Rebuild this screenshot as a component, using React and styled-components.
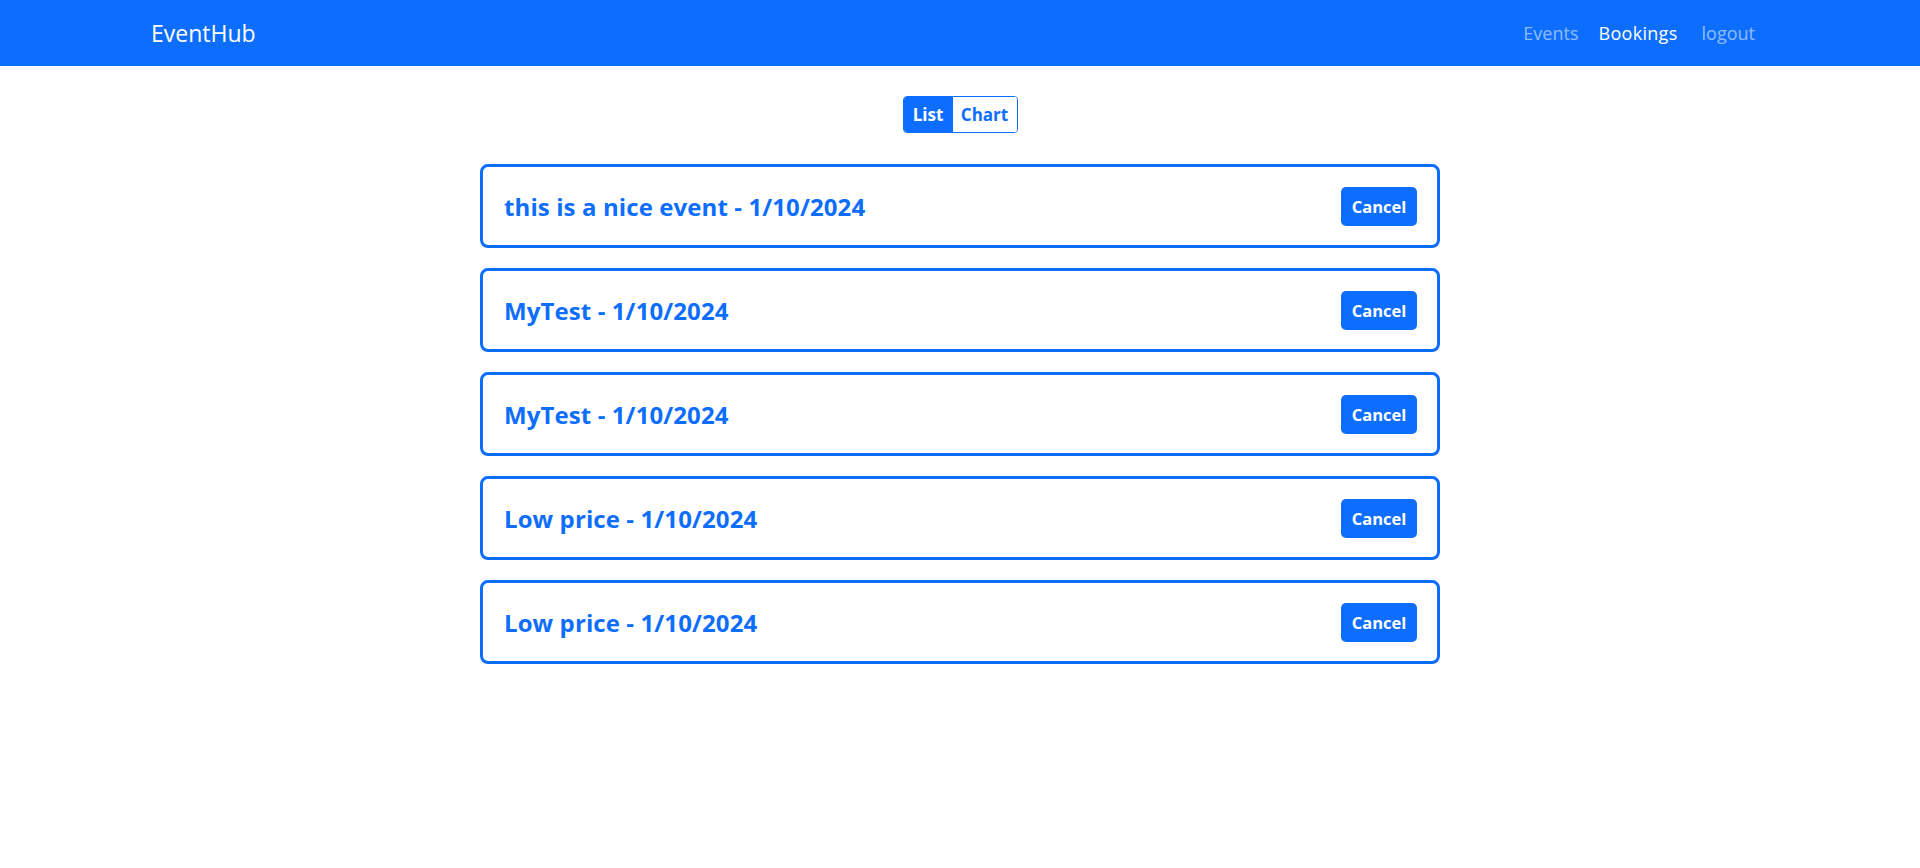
import React, { useState } from "react";
import styled, { createGlobalStyle } from "styled-components";

const GlobalStyle = createGlobalStyle`
  html, body {
    margin: 0;
    padding: 0;
    background: #fff;
    font-family: "Open Sans", "Noto Sans", "Liberation Sans", sans-serif;
  }
  * {
    box-sizing: border-box;
  }
`;

const Navbar = styled.nav`
  height: 66px;
  background: #0d6efd;
  display: flex;
  align-items: center;
  justify-content: space-between;
  padding: 0 165px 0 151px;
`;

const Brand = styled.a`
  color: #fff;
  font-size: 23px;
  text-decoration: none;
  cursor: pointer;
`;

const NavLinks = styled.div`
  display: flex;
  align-items: center;
`;

const NavLink = styled.a`
  color: ${(p) => (p.$active ? "#fff" : "rgba(255, 255, 255, 0.55)")};
  font-size: 18px;
  letter-spacing: ${(p) => (p.$active ? "0.3px" : "0")};
  padding: 8px 0;
  margin-left: ${(p) => p.$gap}px;
  text-decoration: none;
  cursor: pointer;
`;

const Main = styled.main`
  display: flex;
  flex-direction: column;
  align-items: center;
  padding-top: 30px;
`;

const Toggle = styled.div`
  display: flex;
  border: 1px solid #0d6efd;
  border-radius: 4px;
  overflow: hidden;
  margin-bottom: 31px;
`;

const ToggleButton = styled.button`
  border: none;
  background: ${(p) => (p.$active ? "#0d6efd" : "#fff")};
  color: ${(p) => (p.$active ? "#fff" : "#0d6efd")};
  font-family: inherit;
  font-weight: 700;
  font-size: 17px;
  height: 35px;
  width: ${(p) => p.$w}px;
  padding: 0;
  cursor: pointer;
`;

const List = styled.ul`
  list-style: none;
  margin: 0;
  padding: 0;
  width: 960px;
  display: flex;
  flex-direction: column;
  gap: 20px;
`;

const Card = styled.li`
  height: 84px;
  border: 3px solid #0d6efd;
  border-radius: 8px;
  display: flex;
  align-items: center;
  justify-content: space-between;
  padding: 0 20px 0 21px;
`;

const Title = styled.span`
  color: #0d6efd;
  font-size: 24px;
  font-weight: 700;
  letter-spacing: 0.1px;
`;

const CancelButton = styled.button`
  background: #0d6efd;
  color: #fff;
  border: none;
  border-radius: 5px;
  font-family: inherit;
  font-weight: 700;
  font-size: 16.5px;
  width: 76px;
  height: 39px;
  padding: 0;
  cursor: pointer;
`;

const bookings = [
  "this is a nice event - 1/10/2024",
  "MyTest - 1/10/2024",
  "MyTest - 1/10/2024",
  "Low price - 1/10/2024",
  "Low price - 1/10/2024",
];

export default function App() {
  const [view, setView] = useState("list");
  return (
    <>
      <GlobalStyle />
      <Navbar>
        <Brand>EventHub</Brand>
        <NavLinks>
          <NavLink $gap={0}>Events</NavLink>
          <NavLink $gap={20} $active>
            Bookings
          </NavLink>
          <NavLink $gap={24}>logout</NavLink>
        </NavLinks>
      </Navbar>
      <Main>
        <Toggle>
          <ToggleButton $w={49} $active={view === "list"} onClick={() => setView("list")}>
            List
          </ToggleButton>
          <ToggleButton $w={64} $active={view === "chart"} onClick={() => setView("chart")}>
            Chart
          </ToggleButton>
        </Toggle>
        <List>
          {bookings.map((b, i) => (
            <Card key={i}>
              <Title>{b}</Title>
              <CancelButton>Cancel</CancelButton>
            </Card>
          ))}
        </List>
      </Main>
    </>
  );
}
